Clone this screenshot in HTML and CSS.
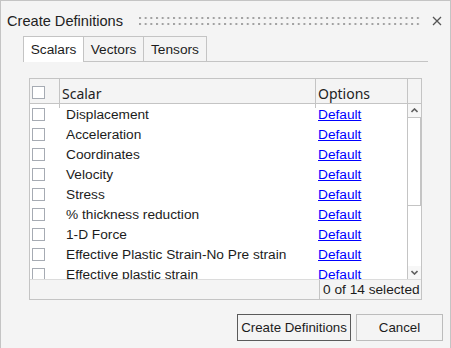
FILE: index.html
```html
<!DOCTYPE html>
<html lang="en">
<head>
    <meta charset="UTF-8" />
    <title>Create Definitions</title>
    <link rel="stylesheet" href="styles.css">
</head>
<body>
<div class="window">
    <!-- title bar -->
    <div class="titlebar">
        <div class="title">Create Definitions</div>
        <svg class="grip" height="8">
            <defs>
                <pattern id="dots" width="5.67" height="6" patternUnits="userSpaceOnUse">
                    <rect x="0" y="0" width="2" height="2" fill="#a2a2a2" />
                </pattern>
            </defs>
            <rect x="0" y="0" width="100%" height="8" fill="url(#dots)" />
        </svg>
        <svg class="close" width="10" height="10" viewBox="0 0 10 10">
            <path d="M1 1 L9 9 M9 1 L1 9" stroke="#555" stroke-width="1.3" fill="none" />
        </svg>
    </div>

    <!-- tabs -->
    <div class="tabs">
        <div class="tab-bar">
            <div class="tab active">Scalars</div>
            <div class="tab">Vectors</div>
            <div class="tab last">Tensors</div>
        </div>

        <div class="panel">
            <div class="grid head">
                <div class="cell cb-cell"><span class="checkbox"></span></div>
                <div class="cell">Scalar</div>
                <div class="cell">Options</div>
                <div class="cell"></div>
            </div>

            <div class="body">
                <div class="rows">
                    <div class="grid row"><div class="cb-cell"><span class="checkbox"></span></div><div class="name">Displacement</div><div class="opt"><a href="#">Default</a></div></div>
                    <div class="grid row"><div class="cb-cell"><span class="checkbox"></span></div><div class="name">Acceleration</div><div class="opt"><a href="#">Default</a></div></div>
                    <div class="grid row"><div class="cb-cell"><span class="checkbox"></span></div><div class="name">Coordinates</div><div class="opt"><a href="#">Default</a></div></div>
                    <div class="grid row"><div class="cb-cell"><span class="checkbox"></span></div><div class="name">Velocity</div><div class="opt"><a href="#">Default</a></div></div>
                    <div class="grid row"><div class="cb-cell"><span class="checkbox"></span></div><div class="name">Stress</div><div class="opt"><a href="#">Default</a></div></div>
                    <div class="grid row"><div class="cb-cell"><span class="checkbox"></span></div><div class="name">% thickness reduction</div><div class="opt"><a href="#">Default</a></div></div>
                    <div class="grid row"><div class="cb-cell"><span class="checkbox"></span></div><div class="name">1-D Force</div><div class="opt"><a href="#">Default</a></div></div>
                    <div class="grid row"><div class="cb-cell"><span class="checkbox"></span></div><div class="name">Effective Plastic Strain-No Pre strain</div><div class="opt"><a href="#">Default</a></div></div>
                    <div class="grid row"><div class="cb-cell"><span class="checkbox"></span></div><div class="name">Effective plastic strain</div><div class="opt"><a href="#">Default</a></div></div>
                </div>
                <div class="scrollbar">
                    <div class="arrow">
                        <svg width="7" height="5" viewBox="0 0 7 5"><path d="M0.5 4 L3.5 1 L6.5 4" stroke="#606060" stroke-width="1.6" fill="none" /></svg>
                    </div>
                    <div class="track">
                        <div class="thumb"></div>
                    </div>
                    <div class="arrow">
                        <svg width="7" height="5" viewBox="0 0 7 5"><path d="M0.5 1 L3.5 4 L6.5 1" stroke="#606060" stroke-width="1.6" fill="none" /></svg>
                    </div>
                </div>
            </div>

            <div class="footer">
                <div class="count">0 of 14 selected</div>
            </div>
        </div>
    </div>

    <!-- buttons -->
    <div class="buttons">
        <button class="btn default">Create Definitions</button>
        <button class="btn">Cancel</button>
    </div>
</div>
</body>
</html>
```

FILE: styles.css
```css
* {
    margin: 0;
    padding: 0;
    box-sizing: border-box;
}

body {
    font-family: "Liberation Sans", Arial, sans-serif;
    color: #1c1c1c;
    background: #f4f4f4;
}

.window {
    width: 451px;
    height: 349px;
    border: 1px solid #c4c4c4;
    background: #f4f4f4;
    display: flex;
    flex-direction: column;
    overflow: hidden;
}

.titlebar {
    display: flex;
    align-items: center;
    height: 28px;
    margin-top: 6px;
    padding-left: 6px;
}

.title {
    font-size: 14.6px;
    color: #222;
}

.grip {
    flex: 1;
    margin-left: 16px;
    margin-right: 10px;
    margin-top: -1px;
}

.close {
    margin-right: 8px;
}

.tabs {
    margin: 1px 22px 0 22px;
}

.tab-bar {
    display: flex;
    height: 26px;
    border-bottom: 1px solid #c4c4c4;
}

.tab {
    width: 60px;
    font-size: 13.7px;
    line-height: 26px;
    text-align: center;
    border-left: 1px solid #c4c4c4;
    border-top: 1px solid #c4c4c4;
    background: #f4f4f4;
}

.tab.last {
    width: 64px;
    border-right: 1px solid #c4c4c4;
}

.tab.active {
    background: #fff;
    height: 26px;
    margin-bottom: -1px;
}

.panel {
    margin: 16px 6px 0 6px;
    border: 1px solid #c4c4c4;
    background: #f4f4f4;
}

.grid {
    display: grid;
    grid-template-columns: 30px 256px 92px 13px;
}

.head {
    height: 25px;
    border-bottom: 1px solid #c4c4c4;
}

.head .cell {
    border-right: 1px solid #c4c4c4;
    font-family: "Noto Sans", sans-serif;
    font-size: 14px;
    color: #222;
    padding-left: 2px;
    line-height: 29px;
}

.head .cell:last-child {
    border-right: none;
}

.cb-cell {
    display: flex;
    align-items: center;
    padding-left: 2px;
}

.head .cb-cell {
    padding-left: 2px;
}

.checkbox {
    display: inline-block;
    width: 13px;
    height: 13px;
    border: 1px solid #a6abb3;
    background: #fff;
}

.head .checkbox {
    margin-top: -3px;
}

.body {
    display: flex;
    height: 175px;
    background: #fff;
}

.rows {
    width: 377px;
    overflow: hidden;
}

.row {
    height: 20px;
    font-size: 13.7px;
    line-height: 20px;
    grid-template-columns: 30px 256px 91px;
}

.name {
    padding-left: 6px;
    padding-top: 1px;
    white-space: nowrap;
}

.opt {
    padding-left: 2px;
    padding-top: 1px;
}

.opt a {
    color: #0000ff;
}

.scrollbar {
    width: 14px;
    border-left: 1px solid #c4c4c4;
    display: flex;
    flex-direction: column;
    background: #fff;
}

.arrow {
    height: 13px;
    display: flex;
    align-items: center;
    justify-content: center;
    background: #f7f7f7;
}

.track {
    flex: 1;
}

.thumb {
    height: 89px;
    border: 1px solid #c4c4c4;
    border-left: none;
    background: #fff;
}

.footer {
    display: flex;
    justify-content: flex-end;
    height: 20px;
    border-top: 1px solid #dcdcdc;
}

.count {
    width: 102px;
    border-left: 1px solid #c4c4c4;
    font-size: 13.7px;
    line-height: 20px;
    padding-left: 3px;
    white-space: nowrap;
}

.buttons {
    display: flex;
    justify-content: flex-end;
    gap: 5px;
    margin-top: 14px;
    padding-right: 7px;
}

.btn {
    height: 27px;
    font-family: "Liberation Sans", Arial, sans-serif;
    font-size: 13.3px;
    color: #1c1c1c;
    background: #f4f4f4;
    border: 1px solid #bcbcbc;
}

.btn.default {
    width: 114px;
    border-color: #5a5a5a;
}

.btn:last-child {
    width: 87px;
}
```
